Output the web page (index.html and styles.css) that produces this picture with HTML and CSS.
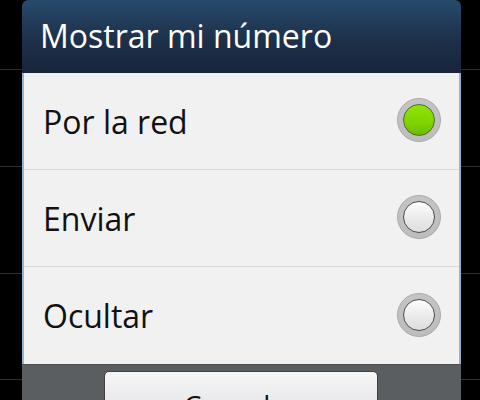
FILE: index.html
```html
<!DOCTYPE html>
<html lang="es">
<head>
  <meta charset="UTF-8" />
  <meta name="viewport" content="width=device-width, initial-scale=1.0"/>
  <title>Mostrar mi número</title>
  <link rel="stylesheet" href="styles.css">
</head>
<body>
  <div class="screen">
    <div class="backdrop">
      <div class="bg-row r1"></div>
      <div class="bg-row r2"></div>
      <div class="bg-row r3"></div>
      <div class="bg-row r4"></div>
    </div>

    <div class="dialog">
      <div class="dialog-title">Mostrar mi número</div>
      <div class="options">
        <label class="option">
          <span>Por la red</span>
          <span class="radio checked"><span class="dot"></span></span>
        </label>
        <label class="option">
          <span>Enviar</span>
          <span class="radio"><span class="dot"></span></span>
        </label>
        <label class="option">
          <span>Ocultar</span>
          <span class="radio"><span class="dot"></span></span>
        </label>
      </div>
      <div class="dialog-footer">
        <button class="btn">Cancelar</button>
      </div>
    </div>
  </div>
</body>
</html>
```

FILE: styles.css
```css
body {
  margin: 0;
  background-color: #000;
  font-family: 'Open Sans', 'Noto Sans', sans-serif;
}

.screen {
  position: relative;
  width: 480px;
  height: 400px;
  overflow: hidden;
}

/* list rows of the screen behind the dialog */
.backdrop {
  display: flex;
  flex-direction: column;
}

.bg-row {
  border-bottom: 1px solid #2e2e2e;
}

.r1 { height: 69px; }
.r2 { height: 96px; }
.r3 { height: 106px; }
.r4 { height: 105px; }

.dialog {
  position: absolute;
  top: 0;
  left: 22px;
  width: 439px;
  border-radius: 6px 6px 0 0;
  overflow: hidden;
}

.dialog-title {
  height: 73px;
  box-sizing: border-box;
  padding: 16px 0 0 18px;
  background: linear-gradient(to bottom, #274a6c, #1d3049 55%, #18243a);
  color: #fff;
  font-size: 32px;
  line-height: 40px;
}

.options {
  background-color: #f1f1f1;
  border-left: 2px solid #93b3d3;
  border-right: 2px solid #93b3d3;
}

.option {
  display: flex;
  align-items: center;
  justify-content: space-between;
  height: 96px;
  padding: 0 18px 0 19px;
  border-bottom: 1px solid #d9d9d9;
  font-size: 32px;
  color: #111;
}

.option:last-child {
  border-bottom: none;
  height: 97px;
}

.radio {
  display: flex;
  align-items: center;
  justify-content: center;
  width: 44px;
  height: 44px;
  box-sizing: border-box;
  border-radius: 50%;
  background: linear-gradient(to bottom, #c4c4c4, #bdbdbd);
  border: 1px solid #a9a9a9;
  margin-top: -2px;
}

.dot {
  width: 32px;
  height: 32px;
  box-sizing: border-box;
  border-radius: 50%;
  border: 1px solid #4d4d4d;
  background: linear-gradient(to bottom, #fdfdfd, #e6e6e6 70%, #dedede);
}

.radio.checked .dot {
  border-color: #4f6b2a;
  background: linear-gradient(to bottom, #8ee600, #7fd400 60%, #6cbb00);
}

.dialog-footer {
  height: 37px;
  background-color: #5b5e61;
  border-top: 1px solid #4a4d50;
  display: flex;
  justify-content: center;
  padding-top: 6px;
  box-sizing: border-box;
}

.btn {
  width: 274px;
  height: 60px;
  border: 1px solid #3f4245;
  border-radius: 5px;
  background: linear-gradient(to bottom, #f6f6f7, #dcdde0);
  font-family: inherit;
  font-size: 28px;
  line-height: 34px;
  color: #111;
  display: flex;
  justify-content: center;
  align-items: flex-start;
  padding-top: 16px;
  margin-left: -2px;
}
```
